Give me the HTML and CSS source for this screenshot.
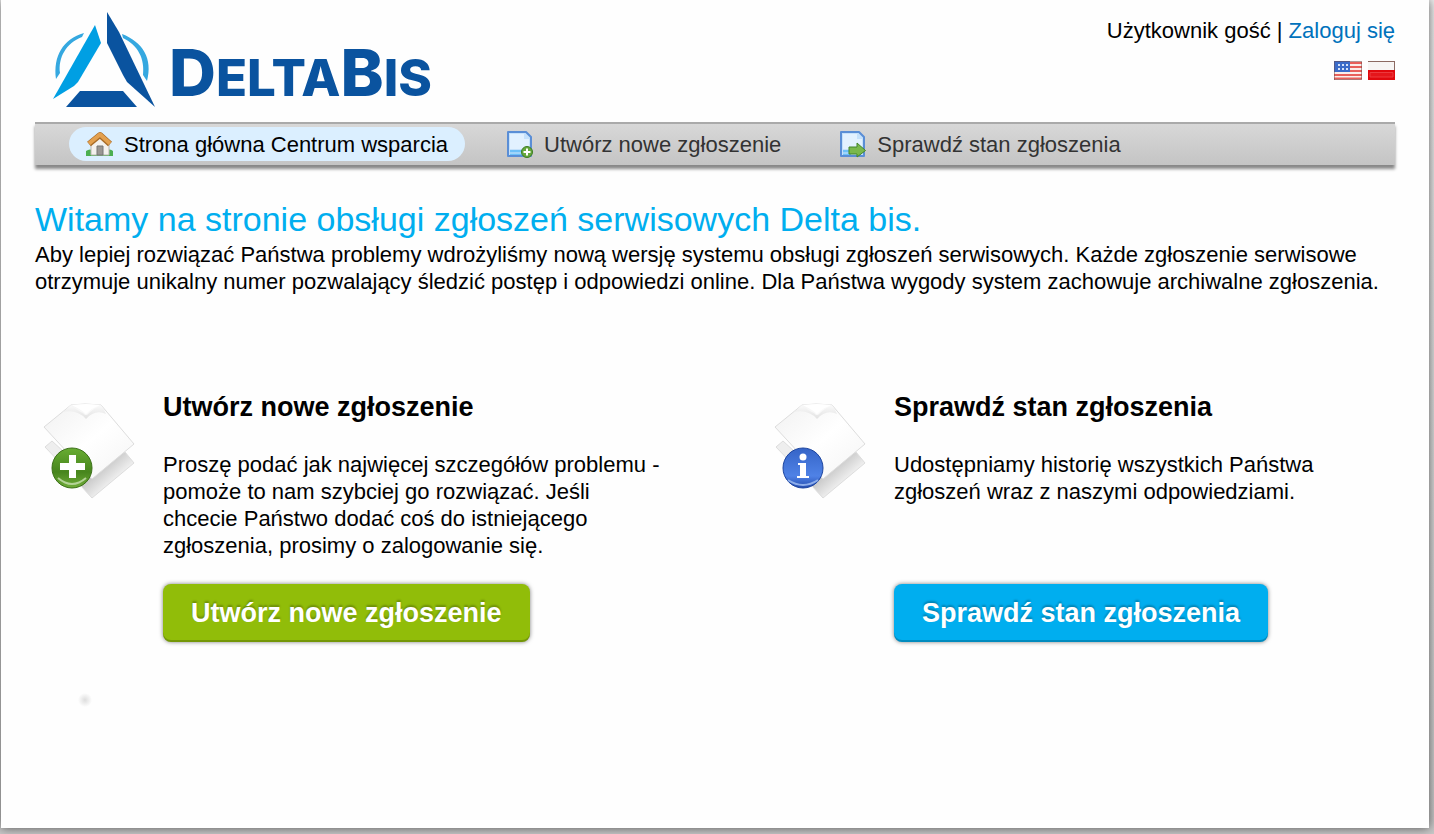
FILE: index.html
```
<!DOCTYPE html>
<html lang="pl">
<head>
    <meta charset="UTF-8">
    <meta name="viewport" content="width=device-width, initial-scale=1.0">
    <title>Centrum wsparcia Delta bis</title>
    <link rel="stylesheet" href="styles.css">
</head>
<body>

    <div class="container">
        <header class="header">
            <a class="logo" href="#" aria-label="DeltaBis">
                <svg width="440" height="120" viewBox="0 0 440 120">
                    <g fill="#35a8e0">
                        <path d="M21 79C18 56 28 39 49 33L47 37C31 43 23 58 25 73Z"/>
                        <path d="M87 34C108 42 118 59 112 81L108 75C110 59 103 45 88 38Z"/>
                    </g>
                    <path fill="#009fe3" d="M60 25L66 43L43 82L39 86L18 99Z"/>
                    <path fill="#0a539f" d="M72 12L84 32L120 107L92 82L88 75L72 43Z"/>
                    <path fill="#0a539f" d="M45 91H88L102 107H31Z"/>
                    <text class="logo-text" x="134" y="96"><tspan class="logo-big">D</tspan>ELTA<tspan class="logo-big">B</tspan>IS</text>
                </svg>
            </a>
            <div class="user">
                <p>Użytkownik gość | <a href="#">Zaloguj się</a></p>
                <div class="flags">
                    <a href="#" aria-label="English">
                        <svg width="28" height="19" viewBox="0 0 28 19">
                            <rect width="28" height="19" fill="#fbeeea"/>
                            <path d="M0 2H28M0 6H28M0 10H28M0 14H28M0 17.500H28" stroke="#e8605a" stroke-width="2"/>
                            <rect width="16" height="11" fill="#3b6cc9"/>
                            <path d="M4 4H15M4 8H15" stroke="#d5e2f8" stroke-width="2" stroke-dasharray="2 2"/>
                            <path d="M.5 19V.5H28M27.500 1V18.500H0" fill="none" stroke="#6b4545" stroke-opacity=".5"/>
                        </svg>
                    </a>
                    <a href="#" aria-label="Polski">
                        <svg width="27" height="19" viewBox="0 0 27 19">
                            <rect width="27" height="19" fill="#f7f5f4"/>
                            <rect y="9" width="27" height="10" fill="#e0080d"/>
                            <path d="M2 11.500H25V16H2Z" fill="#e5161b" stroke="#ec3a3e"/>
                            <path d="M0 .5H27M26.500 0V9" stroke="#8c6a62"/>
                        </svg>
                    </a>
                </div>
            </div>
        </header>

        <nav class="nav">
            <a class="active" href="#">
                <svg width="28" height="28" viewBox="0 0 28 28">
                    <path d="M0 21Q4 18 8 21H20Q24 18 27 21V26H0Z" fill="#4caf50"/>
                    <path d="M5 14L14 6L23 14V25H5Z" fill="#f4f1ee" stroke="#b9b4b0"/>
                    <path d="M11 25V16H17V25Z" fill="#9a9693" stroke="#777"/>
                    <path d="M3 14L14 5L24 14" fill="none" stroke="#a86b27" stroke-width="6" stroke-linejoin="round"/>
                    <path d="M3 13.500L14 4.500L24 13.500" fill="none" stroke="#e3a04f" stroke-width="4" stroke-linejoin="round"/>
                </svg>
                Strona główna Centrum wsparcia
            </a>
            <a href="#">
                <svg width="28" height="28" viewBox="0 0 28 28">
                    <path d="M2 2H20L25 7V26H2Z" fill="#c5e1fb" stroke="#5a8ed6" stroke-width="2" stroke-linejoin="round"/>
                    <path d="M4 4H18V9H23V19H4Z" fill="#e2f1ff"/>
                    <path d="M4 20H16V25H4Z" fill="#6cc0f8"/>
                    <path d="M4 23H16" stroke="#d3e9fd"/>
                    <circle cx="21" cy="22" r="5.500" fill="#65a83c" stroke="#3d7d22"/>
                    <path d="M21 18.500V25.500M17.500 22H24.500" stroke="#fff" stroke-width="2"/>
                </svg>
                Utwórz nowe zgłoszenie
            </a>
            <a href="#">
                <svg width="28" height="28" viewBox="0 0 28 28">
                    <path d="M2 2H20L25 7V26H2Z" fill="#c5e1fb" stroke="#5a8ed6" stroke-width="2" stroke-linejoin="round"/>
                    <path d="M4 4H18V9H23V19H4Z" fill="#e2f1ff"/>
                    <path d="M4 20H12V25H4Z" fill="#6cc0f8"/>
                    <path d="M4 23H12" stroke="#d3e9fd"/>
                    <path d="M10 17H18V13L26.500 20.500L18 27V24H10Z" fill="#79b84c" stroke="#43852a"/>
                </svg>
                Sprawdź stan zgłoszenia
            </a>
        </nav>

        <main class="content">
            <h1>Witamy na stronie obsługi zgłoszeń serwisowych Delta bis.</h1>
            <p>Aby lepiej rozwiązać Państwa problemy wdrożyliśmy nową wersję systemu obsługi zgłoszeń serwisowych. Każde zgłoszenie serwisowe otrzymuje unikalny numer pozwalający śledzić postęp i odpowiedzi online. Dla Państwa wygody system zachowuje archiwalne zgłoszenia.</p>

            <div class="options">
                <section class="option">
                    <svg class="option-icon" width="108" height="108" viewBox="0 0 108 108">
                        <defs>
                            <linearGradient id="paper" x1="0" y1="0" x2="1" y2="1">
                                <stop offset="0" stop-color="#f1f1f1"/>
                                <stop offset=".5" stop-color="#fff"/>
                                <stop offset="1" stop-color="#f4f4f4"/>
                            </linearGradient>
                            <linearGradient id="under" gradientUnits="userSpaceOnUse" x1="64" y1="76" x2="78" y2="92">
                                <stop offset="0" stop-color="#ccc"/>
                                <stop offset="1" stop-color="#fafafa"/>
                            </linearGradient>
                            <linearGradient id="fold" x1="0" y1="0" x2="0" y2="1">
                                <stop offset="0" stop-color="#fafafa"/>
                                <stop offset="1" stop-color="#e2e2e2"/>
                            </linearGradient>
                            <linearGradient id="green" x1="0" y1="0" x2="0" y2="1">
                                <stop offset="0" stop-color="#68ad32"/>
                                <stop offset=".6" stop-color="#47851d"/>
                                <stop offset="1" stop-color="#71ad3a"/>
                            </linearGradient>
                            <linearGradient id="blue" x1="0" y1="0" x2="0" y2="1">
                                <stop offset="0" stop-color="#3564c7"/>
                                <stop offset=".7" stop-color="#4f82e6"/>
                                <stop offset="1" stop-color="#244cae"/>
                            </linearGradient>
                        </defs>
                        <path d="M17 45L10 51L30 72L40 66Z" fill="#eee" stroke="#ddd"/>
                        <path d="M46 90L57 102L99 67L90 56L50 78Z" fill="url(#under)" stroke="#ddd"/>
                        <path d="M9 31L36 9Q49 7 66 9L99 48L57 83Z" fill="url(#paper)" stroke="#ddd"/>
                        <path d="M36 9Q43 15 48 17Q51 21 54 17Q58 13 66 9Q70 15 71 18Q60 13 51 23Q42 13 28 16Z" fill="url(#fold)"/>
                        <path d="M36 9Q46 13 51 18Q56 12 66 9Q51 7 36 9Z" fill="#fff"/>
                        <circle cx="37" cy="72" r="20" fill="url(#green)" stroke="#3b7018"/>
                        <path d="M23 82Q37 94 51 82" fill="none" stroke="#b4d397" stroke-width="2"/>
                        <path d="M34 59H41V67H50V74H41V82H34V74H25V67H34Z" fill="#fff"/>
                    </svg>
                    <h2>Utwórz nowe zgłoszenie</h2>
                    <p>Proszę podać jak najwięcej szczegółów problemu - pomoże to nam szybciej go rozwiązać. Jeśli chcecie Państwo dodać coś do istniejącego zgłoszenia, prosimy o zalogowanie się.</p>
                    <button type="button" class="button green">Utwórz nowe zgłoszenie</button>
                </section>

                <section class="option">
                    <svg class="option-icon" width="108" height="108" viewBox="0 0 108 108">
                        <path d="M17 45L10 51L30 72L40 66Z" fill="#eee" stroke="#ddd"/>
                        <path d="M46 90L57 102L99 67L90 56L50 78Z" fill="url(#under)" stroke="#ddd"/>
                        <path d="M9 31L36 9Q49 7 66 9L99 48L57 83Z" fill="url(#paper)" stroke="#ddd"/>
                        <path d="M36 9Q43 15 48 17Q51 21 54 17Q58 13 66 9Q70 15 71 18Q60 13 51 23Q42 13 28 16Z" fill="url(#fold)"/>
                        <path d="M36 9Q46 13 51 18Q56 12 66 9Q51 7 36 9Z" fill="#fff"/>
                        <circle cx="37" cy="72" r="20" fill="url(#blue)" stroke="#1d459f"/>
                        <path d="M22 84Q37 94 52 84" fill="none" stroke="#8eaeea" stroke-width="2"/>
                        <circle cx="37" cy="61" r="3.500" fill="#fff"/>
                        <path d="M32 67H40V80H43V82H31V80H34V69H32Z" fill="#fff"/>
                    </svg>
                    <h2>Sprawdź stan zgłoszenia</h2>
                    <p>Udostępniamy historię wszystkich Państwa zgłoszeń wraz z naszymi odpowiedziami.</p>
                    <button type="button" class="button blue">Sprawdź stan zgłoszenia</button>
                </section>
            </div>
            <div class="dot"></div>
        </main>
    </div>

</body>
</html>
```
FILE: styles.css
```
* {
    box-sizing: border-box;
}
body {
    margin: 0;
    min-height: 100vh;
    padding: 0 5px 6px 1px;
    display: flex;
    background: linear-gradient(#eeeeee, #c8c8c8);
    font-family: "Liberation Sans", Arial, sans-serif;
    font-size: 22px;
    line-height: 27px;
    color: #000;
}
h1, h2, p {
    margin: 0;
}
a {
    color: #0072bc;
    text-decoration: none;
}
svg {
    display: block;
    overflow: visible;
}
.container {
    flex: 1;
    padding: 0 34px;
    background: #fefefe;
    box-shadow: 0 0 10px rgba(0, 0, 0, 0.6);
}
.header {
    display: flex;
    justify-content: space-between;
    height: 122px;
}
.logo-text {
    font-family: Inter, sans-serif;
    font-weight: 800;
    font-size: 51px;
    line-height: 60px;
    fill: #0a539f;
}
.logo-big {
    font-size: 65px;
}
.user {
    padding-top: 17px;
    text-align: right;
}
.flags {
    display: flex;
    justify-content: flex-end;
    gap: 6px;
    margin-top: 17px;
}
.nav {
    display: flex;
    gap: 24px;
    padding: 3px 34px 4px;
    border-top: 2px solid #aaa;
    background: linear-gradient(#d8d8d8, #c4c4c4);
    box-shadow: 0 4px 3px #888;
}
.nav a {
    display: flex;
    align-items: center;
    gap: 10px;
    height: 34px;
    padding: 0 17px;
    border-radius: 17px;
    color: #333;
}
.nav .active {
    background: #dbefff;
    color: #000;
}
.content {
    padding-top: 34px;
}
h1 {
    margin-bottom: 2px;
    font-size: 34px;
    line-height: 40px;
    font-weight: normal;
    color: #00aeef;
}
.options {
    display: grid;
    grid-template-columns: 1fr 1fr;
    gap: 102px;
    margin-top: 97px;
}
.option {
    position: relative;
    display: flex;
    flex-direction: column;
    align-items: flex-start;
    padding-left: 128px;
}
.option-icon {
    position: absolute;
    left: 0;
    top: 4px;
}
h2 {
    margin-bottom: 29px;
    font-size: 27px;
    line-height: 30px;
}
.option p {
    margin-bottom: 25px;
}
.button {
    height: 58px;
    margin-top: auto;
    padding: 0 28px;
    border: 0;
    border-radius: 8px;
    color: #fff;
    font-family: inherit;
    font-size: 27px;
    font-weight: bold;
    text-shadow: 0 -2px 2px rgba(0, 0, 0, 0.25);
    box-shadow: 0 0 4px rgba(0, 0, 0, 0.5), inset 0 -2px 0 rgba(0, 0, 0, 0.2);
    cursor: pointer;
}
.green {
    background: #91bd09;
}
.blue {
    background: #00aeef;
}
.dot {
    width: 14px;
    height: 14px;
    margin: 51px 0 0 43px;
    background: radial-gradient(closest-side, #ddd, #fefefe);
}
```
